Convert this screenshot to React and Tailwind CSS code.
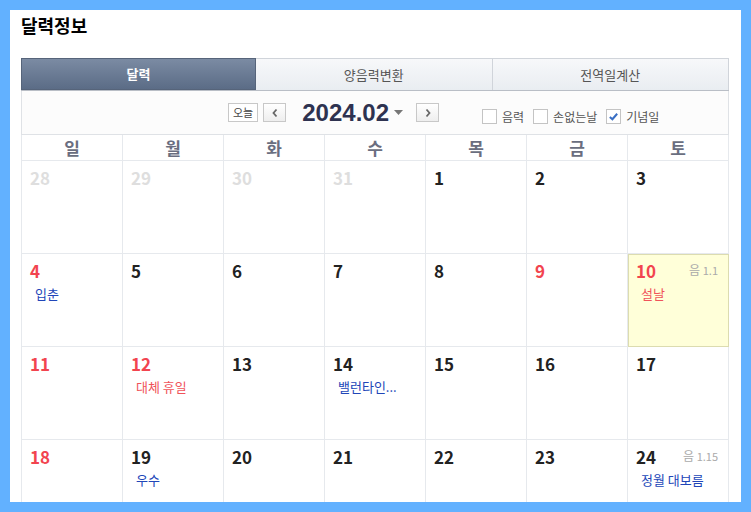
import React from 'react';

const FONT = { fontFamily: '"Noto Sans CJK KR", "Noto Sans", sans-serif' };

const weekdays = ['일', '월', '화', '수', '목', '금', '토'];

// type: prev (지난달), red (휴일), normal
const weeks = [
  [
    { d: 28, type: 'prev' }, { d: 29, type: 'prev' }, { d: 30, type: 'prev' }, { d: 31, type: 'prev' },
    { d: 1 }, { d: 2 }, { d: 3 },
  ],
  [
    { d: 4, type: 'red', event: '입춘' }, { d: 5 }, { d: 6 }, { d: 7 }, { d: 8 },
    { d: 9, type: 'red' }, { d: 10, type: 'red', event: '설날', eventRed: true, lunar: '1.1', today: true },
  ],
  [
    { d: 11, type: 'red' }, { d: 12, type: 'red', event: '대체 휴일', eventRed: true }, { d: 13 },
    { d: 14, event: '밸런타인...' }, { d: 15 }, { d: 16 }, { d: 17 },
  ],
  [
    { d: 18, type: 'red' }, { d: 19, event: '우수' }, { d: 20 }, { d: 21 }, { d: 22 }, { d: 23 },
    { d: 24, event: '정월 대보름', lunar: '1.15' },
  ],
];

function Checkbox({ label, checked }) {
  return (
    <label className="flex items-center gap-[5px] text-[12px] text-[#555]">
      <span className="w-[15px] h-[15px] border border-[#c4c4c4] bg-white flex items-center justify-center">
        {checked && (
          <svg width="11" height="11" viewBox="0 0 12 12">
            <path d="M2 6.5 L4.8 9 L10 3" fill="none" stroke="#3a6fc4" strokeWidth="2.2" />
          </svg>
        )}
      </span>
      {label}
    </label>
  );
}

function DayCell({ cell }) {
  const numColor =
    cell.type === 'prev' ? 'text-[#dedede]' : cell.type === 'red' ? 'text-[#f2444f]' : 'text-[#222]';
  return (
    <div
      className={
        'h-[93px] border-r border-b px-[8px] pt-[6px] ' +
        (cell.today ? 'bg-[#ffffd9] border-[#dcdcb0] outline outline-1 outline-[#dcdcb0] -outline-offset-1' : 'border-[#e6e9ed]')
      }
    >
      <div className="flex items-start justify-between">
        <span className={'text-[17px] font-bold leading-[22px] ' + numColor}>{cell.d}</span>
        {cell.lunar && (
          <span className="text-[12px] text-[#aaa] leading-[20px] mr-[2px]">
            음 <span className="text-[11px]">{cell.lunar}</span>
          </span>
        )}
      </div>
      {cell.event && (
        <div
          className={
            'mt-[3px] pl-[5px] text-[13px] leading-[18px] whitespace-nowrap ' +
            (cell.eventRed ? 'text-[#f0535a]' : 'text-[#2146b8]')
          }
        >
          {cell.event}
        </div>
      )}
    </div>
  );
}

export default function App() {
  return (
    <div className="w-[751px] h-[512px] bg-[#62b1ff] p-[10px]" style={FONT}>
      <div className="h-full bg-white overflow-hidden pl-[11px] pr-[12px]">
        {/* 제목 */}
        <h1 className="h-[48px] text-[18px] font-bold text-black leading-[31px]">달력정보</h1>

        {/* 탭 */}
        <div className="flex h-[33px] border-b border-[#b9bec6]">
          <div className="w-[235px] flex items-center justify-center bg-gradient-to-b from-[#7b8ba3] to-[#5b6c86] border border-[#56647a] text-white text-[13px] font-bold">
            달력
          </div>
          <div className="flex-1 flex items-center justify-center bg-gradient-to-b from-[#f7f8fa] to-[#e9edf1] border-t border-r border-[#d0d4da] text-[#555] text-[13px]">
            양음력변환
          </div>
          <div className="flex-1 flex items-center justify-center bg-gradient-to-b from-[#f7f8fa] to-[#e9edf1] border-t border-r border-[#d0d4da] text-[#555] text-[13px]">
            전역일계산
          </div>
        </div>

        {/* 조작줄 */}
        <div className="h-[44px] bg-[#fcfcfc] border-l border-r border-b border-[#dfe2e6] flex items-center pl-[206px]">
          <button className="h-[19px] px-[4px] border border-[#c8c8c8] bg-white text-[11px] text-[#444] leading-none">
            오늘
          </button>
          <button className="ml-[5px] w-[23px] h-[19px] border border-[#c8c8c8] bg-gradient-to-b from-white to-[#eee] flex items-center justify-center">
            <svg width="8" height="10" viewBox="0 0 8 10">
              <path d="M5.5 1.5 L2.5 5 L5.5 8.5" fill="none" stroke="#666" strokeWidth="1.8" />
            </svg>
          </button>
          <span
            className="ml-[16px] text-[24px] font-bold text-[#2e3250] leading-none"
            style={{ fontFamily: '"Liberation Sans", Arial, sans-serif' }}
          >
            2024.02
          </span>
          <svg className="ml-[5px]" width="9" height="6" viewBox="0 0 9 6">
            <path d="M0 0 L9 0 L4.5 5 Z" fill="#777" />
          </svg>
          <button className="ml-[13px] w-[23px] h-[19px] border border-[#c8c8c8] bg-gradient-to-b from-white to-[#eee] flex items-center justify-center">
            <svg width="8" height="10" viewBox="0 0 8 10">
              <path d="M2.5 1.5 L5.5 5 L2.5 8.5" fill="none" stroke="#666" strokeWidth="1.8" />
            </svg>
          </button>
          <div className="ml-[43px] mt-[8px] flex items-center gap-[9px]">
            <Checkbox label="음력" />
            <Checkbox label="손없는날" />
            <Checkbox label="기념일" checked />
          </div>
        </div>

        {/* 요일 */}
        <div className="grid grid-cols-7 border-l border-[#e6e9ed]">
          {weekdays.map((w) => (
            <div
              key={w}
              className="h-[26px] border-r border-b border-[#e6e9ed] flex items-center justify-center text-[17px] font-bold text-[#6a6e80]"
            >
              {w}
            </div>
          ))}
        </div>

        {/* 날짜 */}
        <div className="grid grid-cols-7 border-l border-[#e6e9ed]">
          {weeks.flat().map((cell, i) => (
            <DayCell key={i} cell={cell} />
          ))}
        </div>
      </div>
    </div>
  );
}
